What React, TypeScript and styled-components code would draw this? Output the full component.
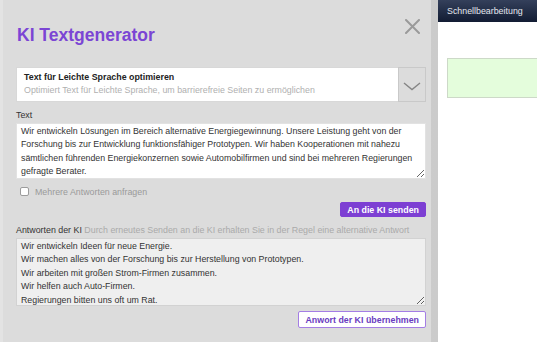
import React from "react";
import styled, { createGlobalStyle } from "styled-components";

const GlobalStyle = createGlobalStyle`
  html, body {
    margin: 0;
    padding: 0;
    background: #dcdcdc;
  }
  * {
    box-sizing: border-box;
  }
`;

const Page = styled.div`
  display: flex;
  height: 342px;
  overflow: hidden;
  font-family: "Liberation Sans", Arial, sans-serif;
  font-size: 8.85px;
  color: #333;
`;

const Overlay = styled.div`
  width: 438px;
  flex: none;
  display: flex;
  background: linear-gradient(90deg, #d4d4d4 0%, #cbcbcb 100%);
`;

const Modal = styled.div`
  width: 431px;
  display: flex;
  flex-direction: column;
  background: #dcdcdc;
  border-left: 3px solid #e3e3e3;
  padding: 0 5px 0 13px;
`;

const Header = styled.div`
  display: flex;
  justify-content: space-between;
  align-items: flex-start;
  padding-top: 19px;
  height: 45px;
`;

const Title = styled.h1`
  margin: 6px 0 0 1px;
  font-size: 17.5px;
  line-height: 20px;
  font-weight: bold;
  color: #7b45d4;
`;

const CloseButton = styled.button`
  border: 0;
  background: none;
  padding: 0;
  margin-right: 6px;
  width: 15px;
  height: 15px;
  cursor: pointer;
  display: flex;
`;

const Select = styled.div`
  margin-top: 22px;
  display: flex;
  height: 35px;
`;

const SelectMain = styled.div`
  flex: 1;
  background: #fff;
  border: 1px solid #d8d8d8;
  border-right: 0;
  padding: 3px 7px;
  display: flex;
  flex-direction: column;
  line-height: 13px;
`;

const SelectTitle = styled.span`
  font-weight: bold;
  color: #222;
`;

const SelectHint = styled.span`
  color: #b0b0b0;
`;

const SelectArrow = styled.div`
  width: 28px;
  border: 1px solid #c9c9c9;
  background: #dcdcdc;
  display: flex;
  align-items: center;
  justify-content: center;
  padding-top: 3px;
`;

const Label = styled.div<{ $gap: number }>`
  margin-top: ${(p) => p.$gap}px;
  line-height: 13px;
  color: #333;
`;

const Hint = styled.span`
  color: #aaa;
`;

const TextBox = styled.textarea<{ $height: number; $muted?: boolean }>`
  display: block;
  width: 100%;
  height: ${(p) => p.$height}px;
  margin: 1px 0 0;
  padding: 1px 4px;
  border: 1px solid ${(p) => (p.$muted ? "#d2d2d2" : "#e2e2e2")};
  background: ${(p) => (p.$muted ? "#efefef" : "#fff")};
  font-family: "Liberation Sans", Arial, sans-serif;
  font-size: 8.8px;
  line-height: 13.4px;
  color: #333;
  overflow: hidden;
  resize: vertical;
  outline: none;
`;

const CheckRow = styled.label`
  margin-top: 6px;
  display: flex;
  align-items: center;
  gap: 6px;
  padding-left: 4px;
  height: 13px;
  color: #9a9a9a;
`;

const Check = styled.input`
  appearance: none;
  margin: 0;
  width: 9px;
  height: 9px;
  border: 1px solid #9c9c9c;
  border-radius: 2px;
  background: #fff;
`;

const ButtonRow = styled.div<{ $gap: number }>`
  display: flex;
  justify-content: flex-end;
  margin-top: ${(p) => p.$gap}px;
`;

const Button = styled.button<{ $outline?: boolean }>`
  font-family: "Liberation Sans", Arial, sans-serif;
  font-size: 8.85px;
  font-weight: bold;
  border-radius: 2px;
  cursor: pointer;
  border: 1px solid ${(p) => (p.$outline ? "#a47ee4" : "#7d3fd3")};
  background: ${(p) => (p.$outline ? "#fff" : "#7d3fd3")};
  color: ${(p) => (p.$outline ? "#6a3cc0" : "#fff")};
  height: ${(p) => (p.$outline ? 17 : 15)}px;
  padding: 0 6px;
`;

const Side = styled.div`
  flex: 1;
  display: flex;
  flex-direction: column;
  background: #fff;
`;

const SideBar = styled.div`
  height: 22px;
  line-height: 22px;
  padding-left: 9px;
  background: linear-gradient(180deg, #34405b 0%, #121c33 100%);
  color: #e4e7ee;
  white-space: nowrap;
`;

const Notice = styled.div`
  margin: 36px 0 0 9px;
  height: 40px;
  background: #e4fddc;
  border: 1px solid #cdd9c8;
  border-right: 0;
`;

const sourceText =
  "Wir entwickeln Lösungen im Bereich alternative Energiegewinnung. Unsere Leistung geht von der Forschung bis zur Entwicklung funktionsfähiger Prototypen. Wir haben Kooperationen mit nahezu sämtlichen führenden Energiekonzernen sowie Automobilfirmen und sind bei mehreren Regierungen gefragte Berater.";

const answerText = [
  "Wir entwickeln Ideen für neue Energie.",
  "Wir machen alles von der Forschung bis zur Herstellung von Prototypen.",
  "Wir arbeiten mit großen Strom-Firmen zusammen.",
  "Wir helfen auch Auto-Firmen.",
  "Regierungen bitten uns oft um Rat.",
].join("\n");

const App: React.FC = () => {
  return (
    <Page>
      <GlobalStyle />
      <Overlay>
        <Modal>
          <Header>
            <Title>KI Textgenerator</Title>
            <CloseButton aria-label="Schließen">
              <svg width="15" height="15" viewBox="0 0 15 15">
                <path
                  d="M1 1 L14 14 M14 1 L1 14"
                  stroke="#9a9a9a"
                  strokeWidth="2"
                  strokeLinecap="round"
                />
              </svg>
            </CloseButton>
          </Header>

          <Select>
            <SelectMain>
              <SelectTitle>Text für Leichte Sprache optimieren</SelectTitle>
              <SelectHint>
                Optimiert Text für Leichte Sprache, um barrierefreie Seiten zu
                ermöglichen
              </SelectHint>
            </SelectMain>
            <SelectArrow>
              <svg width="18" height="9" viewBox="0 0 18 9">
                <polyline
                  points="1,1 9,7.5 17,1"
                  fill="none"
                  stroke="#858585"
                  strokeWidth="1.4"
                />
              </svg>
            </SelectArrow>
          </Select>

          <Label $gap={7}>Text</Label>
          <TextBox $height={56} readOnly defaultValue={sourceText} />

          <CheckRow>
            <Check type="checkbox" />
            Mehrere Antworten anfragen
          </CheckRow>

          <ButtonRow $gap={4}>
            <Button>An die KI senden</Button>
          </ButtonRow>

          <Label $gap={7}>
            Antworten der KI{" "}
            <Hint>
              Durch erneutes Senden an die KI erhalten Sie in der Regel eine
              alternative Antwort
            </Hint>
          </Label>
          <TextBox $height={68} $muted readOnly defaultValue={answerText} />

          <ButtonRow $gap={5}>
            <Button $outline>Anwort der KI übernehmen</Button>
          </ButtonRow>
        </Modal>
      </Overlay>
      <Side>
        <SideBar>Schnellbearbeitung</SideBar>
        <Notice />
      </Side>
    </Page>
  );
};

export default App;
